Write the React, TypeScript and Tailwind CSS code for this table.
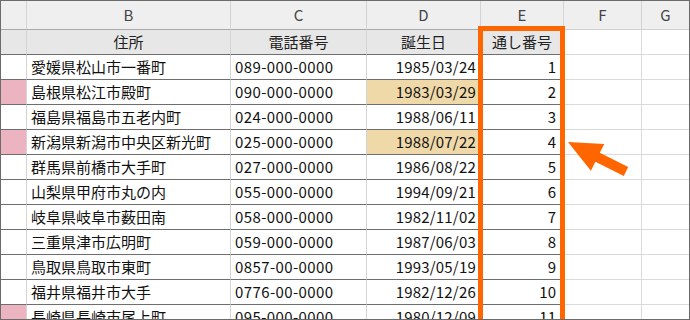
import { Fragment } from 'react'

const ROWS = [
  { addr: '愛媛県松山市一番町', tel: '089-000-0000', birth: '1985/03/24', no: 1, mark: false, hl: false },
  { addr: '島根県松江市殿町', tel: '090-000-0000', birth: '1983/03/29', no: 2, mark: true, hl: true },
  { addr: '福島県福島市五老内町', tel: '024-000-0000', birth: '1988/06/11', no: 3, mark: false, hl: false },
  { addr: '新潟県新潟市中央区新光町', tel: '025-000-0000', birth: '1988/07/22', no: 4, mark: true, hl: true },
  { addr: '群馬県前橋市大手町', tel: '027-000-0000', birth: '1986/08/22', no: 5, mark: false, hl: false },
  { addr: '山梨県甲府市丸の内', tel: '055-000-0000', birth: '1994/09/21', no: 6, mark: false, hl: false },
  { addr: '岐阜県岐阜市薮田南', tel: '058-000-0000', birth: '1982/11/02', no: 7, mark: false, hl: false },
  { addr: '三重県津市広明町', tel: '059-000-0000', birth: '1987/06/03', no: 8, mark: false, hl: false },
  { addr: '鳥取県鳥取市東町', tel: '0857-00-0000', birth: '1993/05/19', no: 9, mark: false, hl: false },
  { addr: '福井県福井市大手', tel: '0776-00-0000', birth: '1982/12/26', no: 10, mark: false, hl: false },
  { addr: '長崎県長崎市尾上町', tel: '095-000-0000', birth: '1980/12/09', no: 11, mark: true, hl: false },
]

// table cells: light verticals, dark horizontals
const T = 'flex items-center border-r border-b border-r-[#d4d4d4] border-b-[#6e6e6e]'
const OUT = 'flex items-center border-b border-[#dadada]'

export default function App() {
  return (
    <div className="relative w-[690px] h-[320px] overflow-hidden border border-[#6b6b6b] bg-white font-['Noto_Sans_CJK_JP','Noto_Sans',sans-serif] text-[15px] leading-[20px] text-[#111]">
      <div className="grid grid-cols-[26px_204px_136px_114px_83px_78px_1fr] grid-rows-[29px_repeat(12,25px)]">
        {/* column letters */}
        <div className="border-r border-b border-r-[#d4d4d4] border-b-[#a8a8a8] bg-[#efefef]" />
        {['B', 'C', 'D', 'E'].map((c) => (
          <div
            key={c}
            className="flex items-center justify-center border-r border-b border-r-[#d4d4d4] border-b-[#a8a8a8] bg-[#efefef] text-[#444]"
          >
            {c}
          </div>
        ))}
        <div className="flex items-center justify-center border-r border-b border-r-[#d4d4d4] border-b-[#d0d0d0] bg-[#efefef] text-[#444]">
          F
        </div>
        <div className="flex items-center justify-center border-b border-[#d0d0d0] bg-[#efefef] text-[#444]">
          G
        </div>

        {/* field names */}
        <div className={`${T} bg-[#e7e7e7]`} />
        <div className={`${T} justify-center bg-[#e7e7e7] text-[#222]`}>住所</div>
        <div className={`${T} justify-center bg-[#e7e7e7] text-[#222]`}>電話番号</div>
        <div className={`${T} justify-center bg-[#e7e7e7] text-[#222]`}>誕生日</div>
        <div className={`${T} justify-center bg-[#e7e7e7] text-[#222]`}>通し番号</div>
        <div className={`${OUT} border-r`} />
        <div className={OUT} />

        {ROWS.map((r) => (
          <Fragment key={r.no}>
            <div className={`${T} ${r.mark ? 'bg-[#ecb4c0]' : ''}`} />
            <div className={`${T} pl-[4px] whitespace-nowrap`}>{r.addr}</div>
            <div className={`${T} pl-[4px] tracking-[0.4px]`}>{r.tel}</div>
            <div className={`${T} justify-end pr-[4px] tracking-[0.2px] ${r.hl ? 'bg-[#f0d9a9]' : ''}`}>
              {r.birth}
            </div>
            <div className={`${T} justify-end pr-[7px]`}>{r.no}</div>
            <div className={`${OUT} border-r`} />
            <div className={OUT} />
          </Fragment>
        ))}
      </div>

      {/* highlight box around column E */}
      <div className="absolute left-[477px] top-[25px] w-[87px] h-[320px] border-[5px] border-[#ff6600]" />

      {/* arrow */}
      <svg className="absolute left-0 top-0" width="690" height="320" viewBox="0 0 690 320">
        <polygon
          points="567,141 603.3,142.9 598.8,151.8 627.2,166 622.8,175 594.4,160.8 589.9,169.7"
          fill="#ff6600"
        />
      </svg>
    </div>
  )
}
